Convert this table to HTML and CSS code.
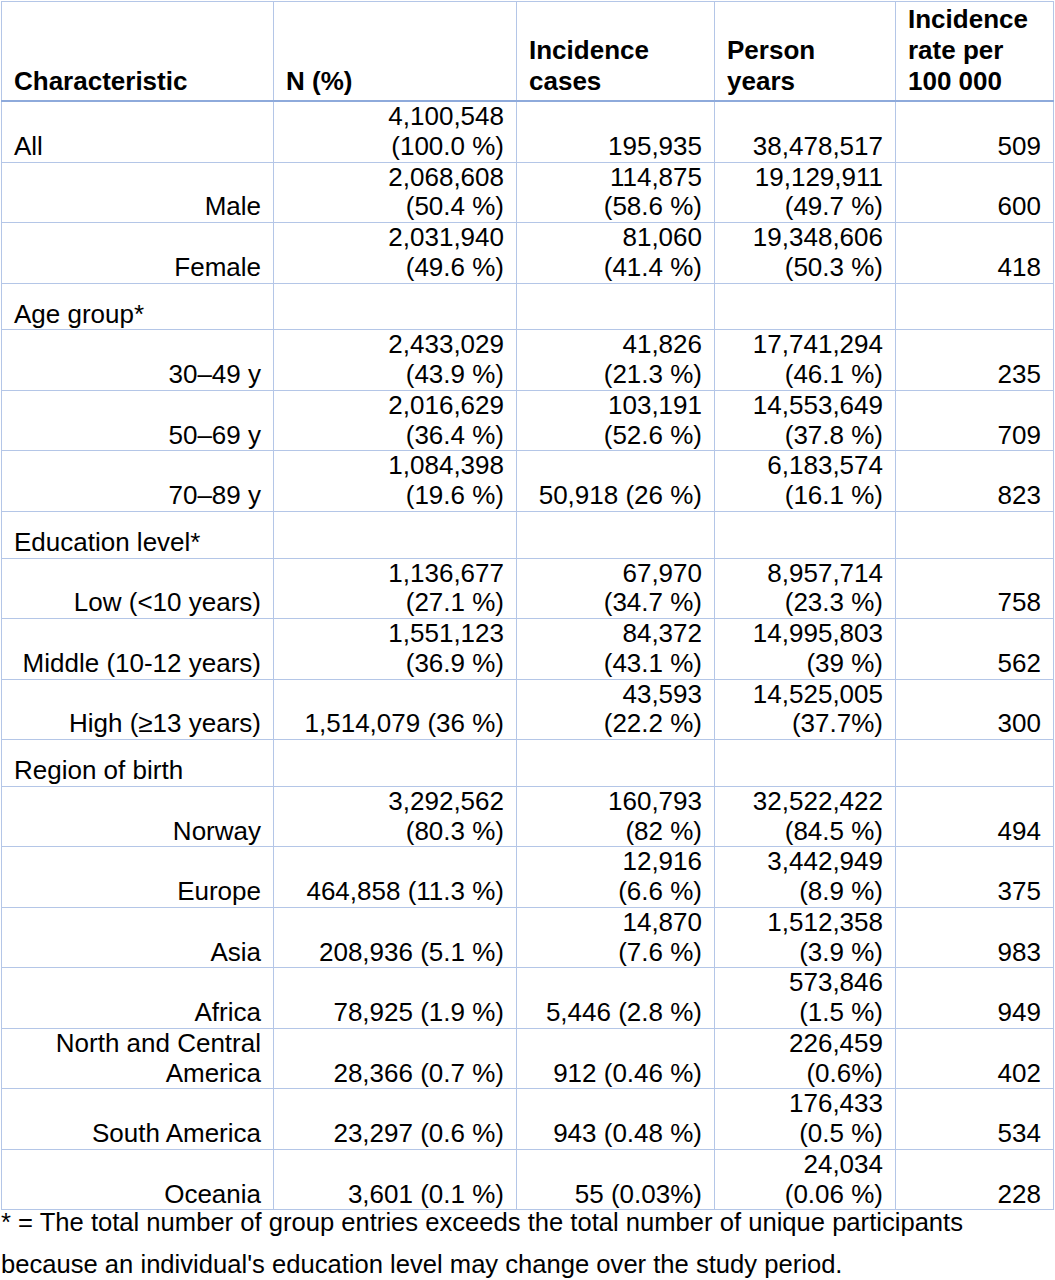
FILE: index.html
```html
<!DOCTYPE html>
<html lang="en">
<head>
    <meta charset="UTF-8">
    <meta name="viewport" content="width=device-width, initial-scale=1.0">
    <title>Incidence by characteristic</title>
    <link rel="stylesheet" href="styles.css">
</head>
<body>
    <table class="stats">
        <colgroup>
            <col class="col-char">
            <col class="col-n">
            <col class="col-cases">
            <col class="col-years">
            <col class="col-rate">
        </colgroup>
        <thead>
            <tr>
                <th>Characteristic</th>
                <th>N (%)</th>
                <th>Incidence<br>cases</th>
                <th>Person<br>years</th>
                <th>Incidence<br>rate per<br>100 000</th>
            </tr>
        </thead>
        <tbody>
            <tr>
                <td class="label">All</td>
                <td>4,100,548<br>(100.0 %)</td>
                <td>195,935</td>
                <td>38,478,517</td>
                <td>509</td>
            </tr>
            <tr>
                <td class="sub">Male</td>
                <td>2,068,608<br>(50.4 %)</td>
                <td>114,875<br>(58.6 %)</td>
                <td>19,129,911<br>(49.7 %)</td>
                <td>600</td>
            </tr>
            <tr>
                <td class="sub">Female</td>
                <td>2,031,940<br>(49.6 %)</td>
                <td>81,060<br>(41.4 %)</td>
                <td>19,348,606<br>(50.3 %)</td>
                <td>418</td>
            </tr>

            <tr class="section">
                <td class="label">Age group*</td>
                <td></td><td></td><td></td><td></td>
            </tr>
            <tr>
                <td class="sub">30–49 y</td>
                <td>2,433,029<br>(43.9 %)</td>
                <td>41,826<br>(21.3 %)</td>
                <td>17,741,294<br>(46.1 %)</td>
                <td>235</td>
            </tr>
            <tr>
                <td class="sub">50–69 y</td>
                <td>2,016,629<br>(36.4 %)</td>
                <td>103,191<br>(52.6 %)</td>
                <td>14,553,649<br>(37.8 %)</td>
                <td>709</td>
            </tr>
            <tr>
                <td class="sub">70–89 y</td>
                <td>1,084,398<br>(19.6 %)</td>
                <td>50,918 (26 %)</td>
                <td>6,183,574<br>(16.1 %)</td>
                <td>823</td>
            </tr>

            <tr class="section">
                <td class="label">Education level*</td>
                <td></td><td></td><td></td><td></td>
            </tr>
            <tr>
                <td class="sub">Low (&lt;10 years)</td>
                <td>1,136,677<br>(27.1 %)</td>
                <td>67,970<br>(34.7 %)</td>
                <td>8,957,714<br>(23.3 %)</td>
                <td>758</td>
            </tr>
            <tr>
                <td class="sub">Middle (10-12 years)</td>
                <td>1,551,123<br>(36.9 %)</td>
                <td>84,372<br>(43.1 %)</td>
                <td>14,995,803<br>(39 %)</td>
                <td>562</td>
            </tr>
            <tr>
                <td class="sub">High (≥13 years)</td>
                <td>1,514,079 (36 %)</td>
                <td>43,593<br>(22.2 %)</td>
                <td>14,525,005<br>(37.7%)</td>
                <td>300</td>
            </tr>

            <tr class="section">
                <td class="label">Region of birth</td>
                <td></td><td></td><td></td><td></td>
            </tr>
            <tr>
                <td class="sub">Norway</td>
                <td>3,292,562<br>(80.3 %)</td>
                <td>160,793<br>(82 %)</td>
                <td>32,522,422<br>(84.5 %)</td>
                <td>494</td>
            </tr>
            <tr>
                <td class="sub">Europe</td>
                <td>464,858 (11.3 %)</td>
                <td>12,916<br>(6.6 %)</td>
                <td>3,442,949<br>(8.9 %)</td>
                <td>375</td>
            </tr>
            <tr>
                <td class="sub">Asia</td>
                <td>208,936 (5.1 %)</td>
                <td>14,870<br>(7.6 %)</td>
                <td>1,512,358<br>(3.9 %)</td>
                <td>983</td>
            </tr>
            <tr>
                <td class="sub">Africa</td>
                <td>78,925 (1.9 %)</td>
                <td>5,446 (2.8 %)</td>
                <td>573,846<br>(1.5 %)</td>
                <td>949</td>
            </tr>
            <tr>
                <td class="sub">North and Central<br>America</td>
                <td>28,366 (0.7 %)</td>
                <td>912 (0.46 %)</td>
                <td>226,459<br>(0.6%)</td>
                <td>402</td>
            </tr>
            <tr>
                <td class="sub">South America</td>
                <td>23,297 (0.6 %)</td>
                <td>943 (0.48 %)</td>
                <td>176,433<br>(0.5 %)</td>
                <td>534</td>
            </tr>
            <tr>
                <td class="sub">Oceania</td>
                <td>3,601 (0.1 %)</td>
                <td>55 (0.03%)</td>
                <td>24,034<br>(0.06 %)</td>
                <td>228</td>
            </tr>
        </tbody>
    </table>

    <p class="footnote">* = The total number of group entries exceeds the total number of unique participants because an individual's education level may change over the study period.</p>
</body>
</html>
```

FILE: styles.css
```css
body {
    font-family: "Liberation Sans", Arial, sans-serif;
    color: #000;
    background: #fff;
    margin: 0;
    padding: 1px 1px 0;
}

.stats {
    border-collapse: collapse;
    table-layout: fixed;
    width: 1052px;
    font-size: 26px;
}

.col-char { width: 272px; }
.col-n { width: 243px; }
.col-cases { width: 198px; }
.col-years { width: 181px; }
.col-rate { width: 158px; }

.stats th,
.stats td {
    border: 1px solid #b4c6e7;
    padding: 0 12px;
    vertical-align: bottom;
    white-space: nowrap;
}

.stats th {
    text-align: left;
    font-weight: bold;
    line-height: 31px;
    padding-top: 2px;
    padding-bottom: 3px;
    border-bottom: 2px solid #8eaadb;
}

.stats td {
    text-align: right;
    line-height: 29.75px;
}

.stats td.label {
    text-align: left;
}

.stats .section td {
    padding-top: 16px;
}

.footnote {
    margin: -9px 0 0;
    font-size: 25.6px;
    line-height: 42px;
}
```
